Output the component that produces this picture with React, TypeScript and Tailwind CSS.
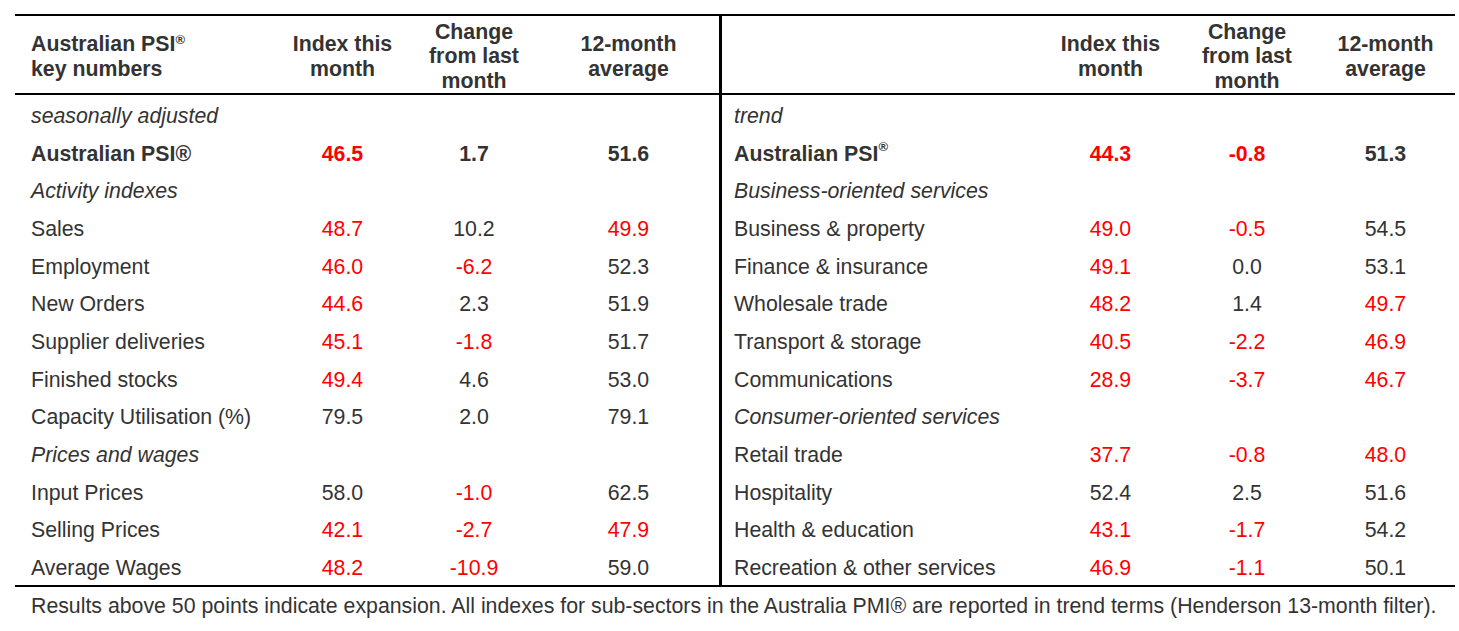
import React from "react";

type Cell = { v: string; red?: boolean };
type Row = {
  label: string;
  kind?: "italic" | "bold";
  sup?: boolean;
  vals?: Cell[];
};

const LEFT: Row[] = [
  { label: "seasonally adjusted", kind: "italic" },
  { label: "Australian PSI®", kind: "bold", vals: [{ v: "46.5", red: true }, { v: "1.7" }, { v: "51.6" }] },
  { label: "Activity indexes", kind: "italic" },
  { label: "Sales", vals: [{ v: "48.7", red: true }, { v: "10.2" }, { v: "49.9", red: true }] },
  { label: "Employment", vals: [{ v: "46.0", red: true }, { v: "-6.2", red: true }, { v: "52.3" }] },
  { label: "New Orders", vals: [{ v: "44.6", red: true }, { v: "2.3" }, { v: "51.9" }] },
  { label: "Supplier deliveries", vals: [{ v: "45.1", red: true }, { v: "-1.8", red: true }, { v: "51.7" }] },
  { label: "Finished stocks", vals: [{ v: "49.4", red: true }, { v: "4.6" }, { v: "53.0" }] },
  { label: "Capacity Utilisation (%)", vals: [{ v: "79.5" }, { v: "2.0" }, { v: "79.1" }] },
  { label: "Prices and wages", kind: "italic" },
  { label: "Input Prices", vals: [{ v: "58.0" }, { v: "-1.0", red: true }, { v: "62.5" }] },
  { label: "Selling Prices", vals: [{ v: "42.1", red: true }, { v: "-2.7", red: true }, { v: "47.9", red: true }] },
  { label: "Average Wages", vals: [{ v: "48.2", red: true }, { v: "-10.9", red: true }, { v: "59.0" }] },
];

const RIGHT: Row[] = [
  { label: "trend", kind: "italic" },
  { label: "Australian PSI", kind: "bold", sup: true, vals: [{ v: "44.3", red: true }, { v: "-0.8", red: true }, { v: "51.3" }] },
  { label: "Business-oriented services", kind: "italic" },
  { label: "Business & property", vals: [{ v: "49.0", red: true }, { v: "-0.5", red: true }, { v: "54.5" }] },
  { label: "Finance & insurance", vals: [{ v: "49.1", red: true }, { v: "0.0" }, { v: "53.1" }] },
  { label: "Wholesale trade", vals: [{ v: "48.2", red: true }, { v: "1.4" }, { v: "49.7", red: true }] },
  { label: "Transport & storage", vals: [{ v: "40.5", red: true }, { v: "-2.2", red: true }, { v: "46.9", red: true }] },
  { label: "Communications", vals: [{ v: "28.9", red: true }, { v: "-3.7", red: true }, { v: "46.7", red: true }] },
  { label: "Consumer-oriented services", kind: "italic" },
  { label: "Retail trade", vals: [{ v: "37.7", red: true }, { v: "-0.8", red: true }, { v: "48.0", red: true }] },
  { label: "Hospitality", vals: [{ v: "52.4" }, { v: "2.5" }, { v: "51.6" }] },
  { label: "Health & education", vals: [{ v: "43.1", red: true }, { v: "-1.7", red: true }, { v: "54.2" }] },
  { label: "Recreation & other services", vals: [{ v: "46.9", red: true }, { v: "-1.1", red: true }, { v: "50.1" }] },
];

const HeadCell = ({ children, divider }: { children?: React.ReactNode; divider?: boolean }) => (
  <div
    className={`h-[79px] pt-[4px] border-b-2 border-black flex items-center justify-center text-center font-bold leading-[24.5px] ${
      divider ? "border-l-[3px]" : ""
    }`}
  >
    {children}
  </div>
);

const LabelCell = ({ row, divider }: { row: Row; divider?: boolean }) => (
  <div
    className={`h-[37.7px] pt-[6px] flex items-center whitespace-nowrap ${
      divider ? "border-l-[3px] border-black pl-[12px]" : "pl-[16px]"
    } ${row.kind === "italic" ? "italic" : ""} ${row.kind === "bold" ? "font-bold" : ""}`}
  >
    {row.label}
    {row.sup && <sup className="text-[13px] -top-[0.55em]">®</sup>}
  </div>
);

const ValCell = ({ cell, bold }: { cell?: Cell; bold?: boolean }) => (
  <div
    className={`h-[37.7px] pt-[6px] flex items-center justify-center ${bold ? "font-bold" : ""} ${
      cell?.red ? "text-[#ff0000]" : ""
    }`}
  >
    {cell?.v}
  </div>
);

export default function App() {
  return (
    <div className="w-[1459px] h-[631px] bg-white text-[#333333] text-[21.3px] font-['Liberation_Sans',Arial,sans-serif] pt-[14px] px-[15px]">
      <div className="w-[1440px] border-t-2 border-b-2 border-black grid grid-cols-[260px_135px_128px_181px_324px_135px_138px_139px]">
        <HeadCell>
          <div className="w-full text-left pl-[16px]">
            Australian PSI<sup className="text-[13px] -top-[0.55em]">®</sup>
            <br />
            key numbers
          </div>
        </HeadCell>
        <HeadCell>
          Index this
          <br />
          month
        </HeadCell>
        <HeadCell>
          Change
          <br />
          from last
          <br />
          month
        </HeadCell>
        <HeadCell>
          12-month
          <br />
          average
        </HeadCell>
        <HeadCell divider />
        <HeadCell>
          Index this
          <br />
          month
        </HeadCell>
        <HeadCell>
          Change
          <br />
          from last
          <br />
          month
        </HeadCell>
        <HeadCell>
          12-month
          <br />
          average
        </HeadCell>

        {LEFT.map((l, i) => {
          const r = RIGHT[i];
          return (
            <React.Fragment key={l.label}>
              <LabelCell row={l} />
              <ValCell cell={l.vals?.[0]} bold={l.kind === "bold"} />
              <ValCell cell={l.vals?.[1]} bold={l.kind === "bold"} />
              <ValCell cell={l.vals?.[2]} bold={l.kind === "bold"} />
              <LabelCell row={r} divider />
              <ValCell cell={r.vals?.[0]} bold={r.kind === "bold"} />
              <ValCell cell={r.vals?.[1]} bold={r.kind === "bold"} />
              <ValCell cell={r.vals?.[2]} bold={r.kind === "bold"} />
            </React.Fragment>
          );
        })}
      </div>
      <p className="pl-[16px] mt-[7px] leading-[24px] whitespace-nowrap">
        Results above 50 points indicate expansion. All indexes for sub-sectors in the Australia PMI® are reported in
        trend terms (Henderson 13-month filter).
      </p>
    </div>
  );
}
